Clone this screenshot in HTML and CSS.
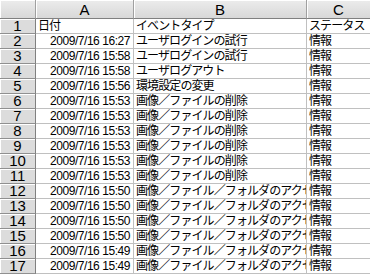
FILE: index.html
```html
<html>
    <head>
        <meta charset="utf-8">
        <link rel="stylesheet" href="styles.css">
    </head>
    <body>
        <table class="sheet">
            <colgroup>
                <col class="w-head"><col class="w-a"><col class="w-b"><col class="w-c">
            </colgroup>
            <tr class="colhead">
                <th class="corner"></th><th>A</th><th>B</th><th class="last">C</th>
            </tr>
            <tr><th class="rowhead">1</th><td>日付</td><td>イベントタイプ</td><td>ステータス</td></tr>
            <tr><th class="rowhead">2</th><td class="num">2009/7/16 16:27</td><td>ユーザログインの試行</td><td>情報</td></tr>
            <tr><th class="rowhead">3</th><td class="num">2009/7/16 15:58</td><td>ユーザログインの試行</td><td>情報</td></tr>
            <tr><th class="rowhead">4</th><td class="num">2009/7/16 15:58</td><td>ユーザログアウト</td><td>情報</td></tr>
            <tr><th class="rowhead">5</th><td class="num">2009/7/16 15:56</td><td>環境設定の変更</td><td>情報</td></tr>
            <tr><th class="rowhead">6</th><td class="num">2009/7/16 15:53</td><td>画像／ファイルの削除</td><td>情報</td></tr>
            <tr><th class="rowhead">7</th><td class="num">2009/7/16 15:53</td><td>画像／ファイルの削除</td><td>情報</td></tr>
            <tr><th class="rowhead">8</th><td class="num">2009/7/16 15:53</td><td>画像／ファイルの削除</td><td>情報</td></tr>
            <tr><th class="rowhead">9</th><td class="num">2009/7/16 15:53</td><td>画像／ファイルの削除</td><td>情報</td></tr>
            <tr><th class="rowhead">10</th><td class="num">2009/7/16 15:53</td><td>画像／ファイルの削除</td><td>情報</td></tr>
            <tr><th class="rowhead">11</th><td class="num">2009/7/16 15:53</td><td>画像／ファイルの削除</td><td>情報</td></tr>
            <tr><th class="rowhead">12</th><td class="num">2009/7/16 15:50</td><td>画像／ファイル／フォルダのアクセス</td><td>情報</td></tr>
            <tr><th class="rowhead">13</th><td class="num">2009/7/16 15:50</td><td>画像／ファイル／フォルダのアクセス</td><td>情報</td></tr>
            <tr><th class="rowhead">14</th><td class="num">2009/7/16 15:50</td><td>画像／ファイル／フォルダのアクセス</td><td>情報</td></tr>
            <tr><th class="rowhead">15</th><td class="num">2009/7/16 15:50</td><td>画像／ファイル／フォルダのアクセス</td><td>情報</td></tr>
            <tr><th class="rowhead">16</th><td class="num">2009/7/16 15:49</td><td>画像／ファイル／フォルダのアクセス</td><td>情報</td></tr>
            <tr><th class="rowhead">17</th><td class="num">2009/7/16 15:49</td><td>画像／ファイル／フォルダのアクセス</td><td>情報</td></tr>
        </table>
    </body>
</html>
```

FILE: styles.css
```css
body{
    margin: 0; background: #ffffff; overflow: hidden;
}
.sheet{
    table-layout: fixed; border-collapse: separate; border-spacing: 0;
    width: 370px;
    font-family: "Liberation Sans", "Noto Sans CJK JP", sans-serif;
}
.w-head{ width: 36px; }
.w-a{ width: 98px; }
.w-b{ width: 173px; }
.w-c{ width: 63px; }

.sheet th, .sheet td{
    padding: 0; box-sizing: border-box; white-space: nowrap;
    border-right: 1px solid #c0c0c0; border-bottom: 1px solid #c0c0c0;
}
.colhead th{
    height: 19px; font-weight: normal; font-size: 15px; line-height: 17px;
    color: #000; text-align: center; vertical-align: bottom;
    background: linear-gradient(#ececec, #d8d8d8);
    border-right: 1px solid #a0a0a0; border-bottom: 1px solid #808080;
    box-shadow: inset 1px 1px 0 #ffffff;
}
.colhead .last{ border-right: none; }
.rowhead{
    height: 15px; font-weight: normal; font-size: 15px; line-height: 14px;
    text-align: center; vertical-align: bottom; color: #000;
    background: #dcdcdc;
    border-right: 1px solid #808080 !important; border-bottom: 1px solid #909090 !important;
    box-shadow: inset 1px 1px 0 #ffffff;
}
.sheet td{
    height: 15px; font-size: 12px; line-height: 14px; vertical-align: bottom;
    letter-spacing: -0.9px;
    padding-left: 2px; color: #000; overflow: hidden; text-overflow: clip;
}
.sheet td:last-child{ border-right: none; }
.sheet td.num{
    text-align: right; padding-right: 3px; padding-left: 0;
    letter-spacing: -0.45px;
}
```
